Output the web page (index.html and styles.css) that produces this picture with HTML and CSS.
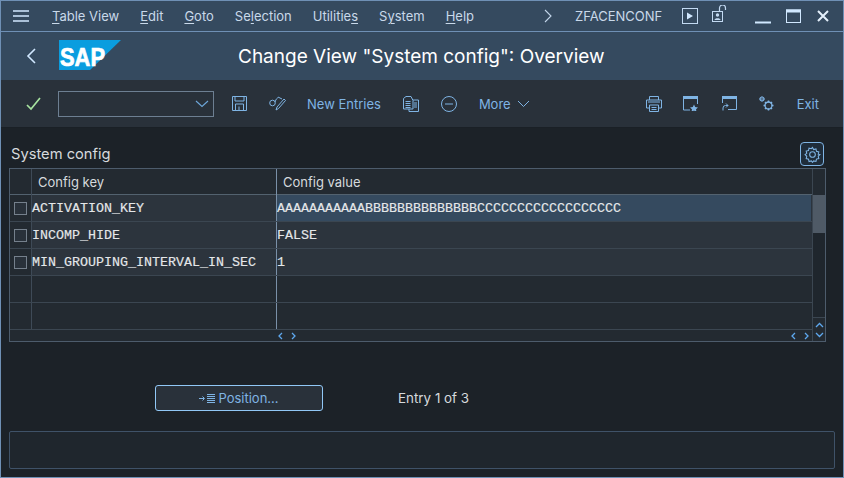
FILE: index.html
```html
<!DOCTYPE html>
<html lang="en">
<head>
<meta charset="utf-8">
<title>Change View</title>
<link rel="stylesheet" href="styles.css">
</head>
<body>
<div class="window">
  <header class="menubar">
    <svg class="burger" width="16" height="12" viewBox="0 0 16 12"><path d="M0 1h16M0 6h16M0 11h16" stroke="#d1e8ff" stroke-width="1.6" fill="none"/></svg>
    <nav class="menus">
      <span><u>T</u>able View</span><span><u>E</u>dit</span><span><u>G</u>oto</span><span>Se<u>l</u>ection</span><span>Utilitie<u>s</u></span><span>S<u>y</u>stem</span><span><u>H</u>elp</span>
    </nav>
    <svg class="tcode-chev" width="8" height="14" viewBox="0 0 8 14"><path d="M1 1l6 6-6 6" stroke="#c3d6ea" stroke-width="1.1" fill="none"/></svg>
    <span class="tcode">ZFACENCONF</span>
    <svg class="ic-play" width="16" height="16" viewBox="0 0 16 16"><rect x=".5" y=".5" width="15" height="15" fill="none" stroke="#c3daf2"/><path d="M5 4.500l6 3.500-6 3.500z" fill="#d1e8ff"/></svg>
    <svg class="ic-lock" width="16" height="17" viewBox="0 0 16 17"><rect x=".5" y="6.500" width="10" height="10" fill="none" stroke="#c3daf2"/><path d="M7.500 6.500V3a3 3 0 0 1 6 0v2" fill="none" stroke="#c3daf2" stroke-width="1.200"/><circle cx="5.500" cy="10" r="1.700" fill="#c3daf2"/><path d="M2.500 15c0-2.500 6-2.500 6 0z" fill="#c3daf2"/></svg>
    <svg class="ic-min" width="16" height="16" viewBox="0 0 16 16"><path d="M0 14.500h16" stroke="#d1e8ff" stroke-width="2"/></svg>
    <svg class="ic-max" width="15" height="14" viewBox="0 0 15 14"><rect x=".5" y="1" width="14" height="12.500" fill="none" stroke="#d1e8ff"/><path d="M0 2h15" stroke="#d1e8ff" stroke-width="3"/></svg>
    <svg class="ic-close" width="12" height="12" viewBox="0 0 12 12"><path d="M1 1l10 10M11 1L1 11" stroke="#e4f0fc" stroke-width="2"/></svg>
  </header>

  <section class="titlebar">
    <svg class="back" width="10" height="16" viewBox="0 0 10 16"><path d="M9 1L2 8l7 7" stroke="#d1e8ff" stroke-width="1.600" fill="none"/></svg>
    <svg class="logo" width="62" height="30" viewBox="0 0 62 30"><path d="M0 0h62L31 30H0z" fill="#0a9ddf"/><text x="1" y="25.500" class="logo-text" textLength="45" lengthAdjust="spacingAndGlyphs">SAP</text></svg>
    <h1>Change View "System config": Overview</h1>
  </section>

  <section class="toolbar">
    <svg class="ic-check" width="15" height="14" viewBox="0 0 15 14"><path d="M1 8l4 4 9-11" stroke="#a7e3a0" stroke-width="1.700" fill="none"/></svg>
    <div class="combo"><svg width="14" height="8" viewBox="0 0 14 8"><path d="M1 1l6 5.500L13 1" stroke="#6ea7da" stroke-width="1.100" fill="none"/></svg></div>
    <svg class="ic ic-save" width="15" height="15" viewBox="0 0 15 15"><path d="M.5.5h14v14H.5zM3 .5v4.500h9V.5M3.500 14.500V8h8v6.500M7 10.500v4" fill="none" stroke="#7fb4e4"/></svg>
    <svg class="ic ic-glasses" width="17" height="16" viewBox="0 0 17 16"><circle cx="3.500" cy="7" r="2.800" fill="none" stroke="#7fb4e4"/><path d="M6 6c1-3 2-4 4-5M8 11l7-8 1.500 1.500-7 8L7 14zM10 1.500l3 1.500" fill="none" stroke="#7fb4e4"/></svg>
    <span class="tool-text new">New Entries</span>
    <svg class="ic ic-copy" width="16" height="16" viewBox="0 0 16 16"><path d="M.5 2.500V13h9.500V4.500L8 .5H3zM10 4h5.500v11.500H6V13M2.500 5.500h5M2.500 7.500h5M2.500 9.500h5M2.500 11.500h5M11 7h3M11 9h3M11 11h3" fill="none" stroke="#7fb4e4"/></svg>
    <svg class="ic ic-minus" width="16" height="16" viewBox="0 0 16 16"><circle cx="8" cy="8" r="7.500" fill="none" stroke="#7fb4e4"/><path d="M4 8h8" stroke="#7fb4e4"/></svg>
    <span class="tool-text more">More</span>
    <svg class="more-chev" width="13" height="8" viewBox="0 0 13 8"><path d="M1 1l5.500 5.500L12 1" stroke="#7fb4e4" fill="none"/></svg>
    <span class="spacer"></span>
    <svg class="ic" width="16" height="16" viewBox="0 0 16 16"><path d="M3.500 4V.5h9V4M3.500 12H.5V4h15v8h-3M3.500 9h9v6.500h-9zM5.500 11.500h5M5.500 13.500h5M2 6h12" fill="none" stroke="#7fb4e4"/></svg>
    <svg class="ic ic-fav" width="15" height="15" viewBox="0 0 15 15"><path d="M7 14H.5V.5h14V8" fill="none" stroke="#7fb4e4"/><path d="M0 1.500h15" stroke="#7fb4e4" stroke-width="3"/><path d="M11 8.500l1.200 2.600 2.800.3-2 1.900.5 2.700-2.500-1.400-2.500 1.400.5-2.700-2-1.900 2.800-.3z" fill="#7fb4e4"/></svg>
    <svg class="ic ic-win" width="15" height="15" viewBox="0 0 15 15"><path d="M.5 7V.5h14v13H6" fill="none" stroke="#7fb4e4"/><path d="M0 1.500h15" stroke="#7fb4e4" stroke-width="3"/><path d="M1 14.500V12a2.500 2.500 0 0 1 2.500-2.500H6M4 7.500l2 2-2 2" fill="none" stroke="#7fb4e4"/></svg>
    <svg class="ic ic-gears" width="15" height="15" viewBox="0 0 15 15"><circle cx="3" cy="3" r="2" fill="none" stroke="#7fb4e4" stroke-width="1.200"/><path d="M3 .2v5.600M.2 3h5.600" stroke="#7fb4e4" stroke-width=".6"/><circle cx="9.500" cy="9.500" r="3.500" fill="none" stroke="#7fb4e4" stroke-width="1.300"/><path d="M9.500 4.500v2M9.500 12.500v2M4.500 9.500h2M12.500 9.500h2M6 6l1.400 1.400M11.600 11.600L13 13M13 6l-1.400 1.400M7.400 11.600L6 13" stroke="#7fb4e4" stroke-width="1.500"/></svg>
    <span class="tool-text exit">Exit</span>
  </section>

  <main class="content">
    <div class="section-head">
      <h2>System config</h2>
      <button class="gear-btn" type="button"><svg width="17" height="17" viewBox="0 0 24 24"><path d="M12 2l1.600 3 3.300-.8.700 3.300 3.300.8-.8 3.300L22.500 12l-2.400 2.400.8 3.300-3.300.8-.7 3.300-3.300-.8L12 23l-1.600-1.900-3.300.8-.7-3.300-3.300-.8.800-3.300L1.500 12l2.400-1.600-.8-3.300 3.300-.8.700-3.300 3.300.8z" fill="none" stroke="#7fb4e4" stroke-width="1.500"/><circle cx="12" cy="12" r="4" fill="none" stroke="#7fb4e4" stroke-width="1.500"/></svg></button>
    </div>

    <div class="table">
      <div class="grid">
        <div class="row head">
          <div class="sel"></div><div class="key">Config key</div><div class="val">Config value</div>
        </div>
        <div class="row data active">
          <div class="sel"><i class="box"></i></div><div class="key mono">ACTIVATION_KEY</div><div class="val mono">AAAAAAAAAAABBBBBBBBBBBBBBCCCCCCCCCCCCCCCCCC</div>
        </div>
        <div class="row data">
          <div class="sel"><i class="box"></i></div><div class="key mono">INCOMP_HIDE</div><div class="val mono">FALSE</div>
        </div>
        <div class="row data">
          <div class="sel"><i class="box"></i></div><div class="key mono">MIN_GROUPING_INTERVAL_IN_SEC</div><div class="val mono">1</div>
        </div>
        <div class="row empty"><div class="sel"></div><div class="key"></div><div class="val"></div></div>
        <div class="row empty"><div class="sel"></div><div class="key"></div><div class="val"></div></div>
        <div class="hscroll">
          <div class="hs-left"></div>
          <div class="hs-right">
            <svg class="arrows" width="18" height="8" viewBox="0 0 18 8"><path d="M4 1L1 4l3 3M14 1l3 3-3 3" stroke="#5ea8ee" stroke-width="1.300" fill="none"/></svg>
            <span class="spacer"></span>
            <svg class="arrows end" width="18" height="8" viewBox="0 0 18 8"><path d="M4 1L1 4l3 3M14 1l3 3-3 3" stroke="#5ea8ee" stroke-width="1.300" fill="none"/></svg>
          </div>
        </div>
      </div>
      <div class="vscroll">
        <div class="vs-head"></div>
        <div class="vs-track"><div class="vs-thumb"></div></div>
        <div class="vs-btns">
          <svg width="9" height="6" viewBox="0 0 9 6"><path d="M1 5l3.500-3.500L8 5" stroke="#5ea8ee" stroke-width="1.300" fill="none"/></svg>
          <svg width="9" height="6" viewBox="0 0 9 6"><path d="M1 1l3.500 3.500L8 1" stroke="#5ea8ee" stroke-width="1.300" fill="none"/></svg>
        </div>
      </div>
    </div>

    <div class="position-row">
      <button class="pos-btn" type="button"><svg width="16" height="9" viewBox="0 0 16 9"><path d="M0 4.500h5M3.500 2.500l2 2-2 2M8 .5h8M8 2.500h8M8 4.500h8M8 6.500h8M8 8.500h8" stroke="#7fb4e4" fill="none"/></svg>Position...</button>
      <span class="entry">Entry 1 of 3</span>
    </div>

    <div class="statusbar"></div>
  </main>
</div>
</body>
</html>
```

FILE: styles.css
```css
* { box-sizing: border-box; }
html, body { margin: 0; padding: 0; }
body { width: 844px; height: 478px; overflow: hidden; background: #1c2228; font-family: Inter, "Noto Sans", sans-serif; }
.window { width: 844px; height: 478px; display: flex; flex-direction: column; border: 1px solid #6f90b5; }
svg { display: block; flex: none; }

.menubar { height: 31px; flex: none; display: flex; align-items: center; background: #354a5f; border-bottom: 1px solid #6f90b5; color: #c9d9ea; font-size: 13px; padding-left: 12px; }
.menus { display: flex; gap: 21px; margin-left: 23px; width: 492px; }
.menus u { text-underline-offset: 2px; text-decoration-thickness: 1px; }
.tcode { margin-left: 23px; width: 91px; white-space: nowrap; }
.ic-play { margin-left: 16px; }
.ic-lock { margin-left: 14px; margin-top: -5px; }
.ic-min { margin-left: 27px; }
.ic-max { margin-left: 15px; }
.ic-close { margin-left: 16px; }

.titlebar { height: 48px; flex: none; display: flex; align-items: center; background: #354a5f; padding-left: 25px; }
.logo { margin-left: 23px; margin-top: -2px; }
.logo-text { font: bold 25px "Liberation Sans", sans-serif; fill: #fff; stroke: #fff; stroke-width: .7px; }
h1 { margin: 0 0 0 117px; font-size: 19px; font-weight: 400; color: #fff; white-space: nowrap; line-height: 1; }

.toolbar { height: 48px; flex: none; display: flex; align-items: center; background: #29313a; border-bottom: 1px solid #1a2026; padding-left: 25px; color: #7fb4e4; font-size: 13px; }
.tool-text { padding-top: 1px; }
.combo { width: 156px; height: 26px; margin-left: 17px; border: 1px solid #6d7f92; background: #29313a; display: flex; align-items: center; justify-content: flex-end; padding-right: 4px; }
.ic-save { margin-left: 18px; }
.ic-glasses { margin-left: 22px; }
.tool-text.new { margin-left: 21px; }
.ic-copy { margin-left: 22px; }
.ic-minus { margin-left: 22px; }
.tool-text.more { margin-left: 22px; }
.more-chev { margin-left: 6px; }
.spacer { flex: 1; }
.ic-fav { margin-left: 21px; }
.ic-win { margin-left: 24px; }
.ic-gears { margin-left: 22px; }
.exit { margin-left: 23px; margin-right: 24px; }

.content { flex: 1; min-height: 0; display: flex; flex-direction: column; padding: 14px 8px 7px 8px; }
.section-head { display: flex; align-items: flex-start; justify-content: space-between; height: 25px; padding-right: 11px; margin-bottom: 1px; }
h2 { margin: 2px 0 0 2px; font-size: 14.7px; font-weight: 400; color: #d6dadd; line-height: 20px; }
.gear-btn { width: 24px; height: 24px; padding: 0; display: flex; align-items: center; justify-content: center; background: #1f2d3b; border: 1px solid #7fb4e4; border-radius: 4px; }

.table { width: 817px; height: 174px; flex: none; display: flex; border: 1px solid #4d5c6c; background: #232a31; }
.grid { flex: 1; min-width: 0; display: flex; flex-direction: column; }
.row { display: grid; grid-template-columns: 22px 245px 1fr; flex: none; }
.sel { border-right: 1px solid #3e4a57; display: flex; align-items: center; justify-content: center; }
.key { border-right: 1px solid #7a90a8; white-space: nowrap; }
.row.head { height: 26px; border-bottom: 1px solid #53626f; color: #d6dadd; font-size: 13px; line-height: 27px; }
.row.head .key, .row.head .val { padding-left: 6px; }
.row.data, .row.empty { height: 27px; grid-template-rows: 26px; border-bottom: 1px solid #3b4651; }
.row.data { background: #2c343d; }
.row.data .sel { background: #232a31; }
.row.active .val { background: #354a5f; margin-right: 1px; }
.mono { font-family: "Liberation Mono", monospace; font-size: 13.33px; color: #e4e7e9; -webkit-text-stroke: .15px #e4e7e9; line-height: 28px; white-space: nowrap; }
.box { display: block; width: 13px; height: 13px; border: 1px solid #75808c; background: #29313a; }
.hscroll { flex: 1; display: grid; grid-template-columns: 267px 1fr; }
.hs-right { display: flex; align-items: center; padding-left: 1px; padding-right: 3px; }
.vscroll { width: 13px; flex: none; display: flex; flex-direction: column; border-left: 1px solid #3b4651; }
.vs-head { height: 26px; flex: none; }
.vs-track { height: 122px; flex: none; background: #1f262d; }
.vs-thumb { height: 38px; background: #4f5a66; }
.vs-btns { flex: 1; display: flex; flex-direction: column; align-items: center; justify-content: space-around; border-top: 1px solid #3b4651; padding: 2px 0 1px; }

.position-row { display: flex; align-items: center; margin-top: 43px; padding-left: 146px; }
.pos-btn { width: 168px; height: 26px; display: flex; align-items: center; justify-content: center; gap: 3px; background: #29313a; border: 1px solid #91c8f6; border-radius: 3px; color: #7fb4e4; font: 13px Inter, sans-serif; padding: 0; }
.entry { margin-left: 75px; font-size: 13.4px; color: #d6dadd; }

.statusbar { width: 826px; height: 38px; margin-top: 20px; flex: none; border: 1px solid #3f5268; background: #1f262d; border-radius: 2px; }
```
